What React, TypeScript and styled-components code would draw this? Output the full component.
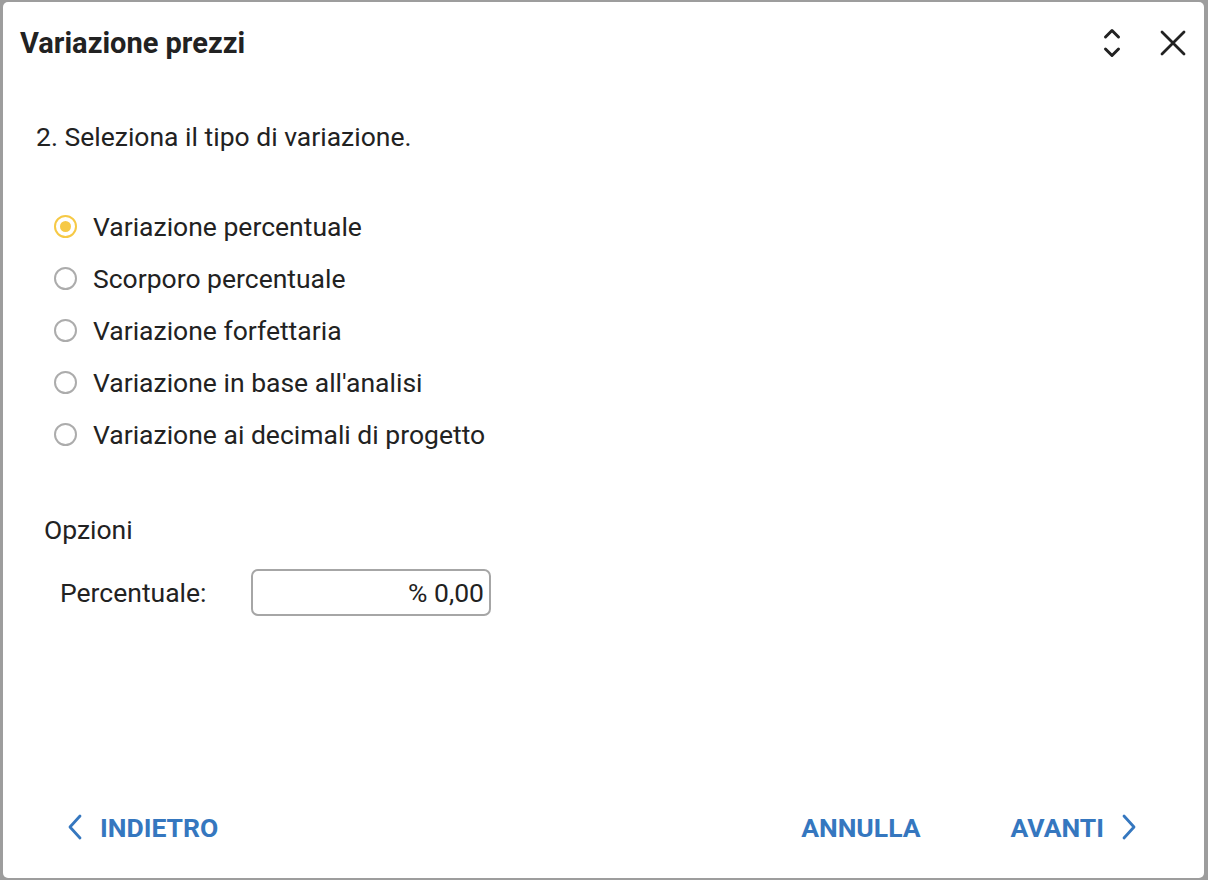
import React, { useState } from 'react';
import styled, { createGlobalStyle } from 'styled-components';

const GlobalStyle = createGlobalStyle`
  html, body {
    margin: 0;
    padding: 0;
    background: #9d9d9d;
  }
  * {
    box-sizing: border-box;
  }
`;

const Backdrop = styled.div`
  width: 1208px;
  height: 880px;
  padding: 2px 4px 2px 3px;
  background: #9d9d9d;
  font-family: Roboto, 'Liberation Sans', sans-serif;
  color: #222;
`;

const Dialog = styled.div`
  height: 100%;
  background: #fff;
  border-radius: 5px;
  display: flex;
  flex-direction: column;
`;

const Header = styled.div`
  height: 82px;
  padding: 0 18px 0 17px;
  display: flex;
  align-items: center;
  justify-content: space-between;
`;

const Title = styled.h1`
  margin: 0;
  font-size: 29px;
  font-weight: 700;
  color: #222;
`;

const HeaderTools = styled.div`
  display: flex;
  align-items: center;
  gap: 38px;
`;

const IconButton = styled.button`
  border: 0;
  padding: 0;
  background: none;
  display: flex;
  align-items: center;
  justify-content: center;
  color: #222;
  cursor: pointer;
`;

const Body = styled.div`
  padding: 38px 0 0 33px;
  flex: 1;
`;

const Instruction = styled.p`
  margin: 0;
  font-size: 26.5px;
  line-height: 30px;
`;

const RadioList = styled.div`
  margin-top: 48px;
  padding-left: 18px;
  display: flex;
  flex-direction: column;
`;

const RadioRow = styled.label`
  height: 52px;
  display: flex;
  align-items: center;
  gap: 16px;
  font-size: 26.5px;
  cursor: pointer;
`;

const RadioCircle = styled.span<{ $checked: boolean }>`
  width: 23px;
  height: 23px;
  border-radius: 50%;
  border: 2.5px solid ${(p) => (p.$checked ? '#f6c945' : '#acacac')};
  display: flex;
  align-items: center;
  justify-content: center;
  &::after {
    content: '';
    width: 11px;
    height: 11px;
    border-radius: 50%;
    background: ${(p) => (p.$checked ? '#f6c945' : 'transparent')};
  }
`;

const Section = styled.div`
  margin-top: 55px;
  padding-left: 8px;
`;

const SectionTitle = styled.div`
  font-size: 26.5px;
  line-height: 30px;
`;

const FieldRow = styled.div`
  margin-top: 24px;
  padding-left: 16px;
  display: flex;
  align-items: center;
`;

const FieldLabel = styled.span`
  width: 191px;
  font-size: 26.5px;
`;

const NumberInput = styled.input`
  width: 240px;
  height: 47px;
  border: 2px solid #a6a6a6;
  border-radius: 7px;
  padding: 0 5px;
  text-align: right;
  font-family: Roboto, 'Liberation Sans', sans-serif;
  font-size: 26.5px;
  color: #222;
  outline: none;
`;

const Footer = styled.div`
  height: 102px;
  padding: 0 67px 0 64px;
  display: flex;
  align-items: center;
`;

const Spacer = styled.div`
  flex: 1;
`;

const TextButton = styled.button<{ $gapAfter?: number }>`
  border: 0;
  background: none;
  padding: 0;
  display: flex;
  align-items: center;
  gap: 17px;
  font-family: Roboto, 'Liberation Sans', sans-serif;
  font-size: 26.5px;
  font-weight: 700;
  color: #3577bf;
  cursor: pointer;
  margin-right: ${(p) => p.$gapAfter ?? 0}px;
`;

const Chevron = ({ dir }: { dir: 'left' | 'right' }) => (
  <svg width="16" height="26" viewBox="0 0 16 26" fill="none">
    <path
      d={dir === 'left' ? 'M13 2 L3 13 L13 24' : 'M3 2 L13 13 L3 24'}
      stroke="#3577bf"
      strokeWidth="2.8"
      strokeLinecap="round"
      strokeLinejoin="round"
    />
  </svg>
);

const options = [
  'Variazione percentuale',
  'Scorporo percentuale',
  'Variazione forfettaria',
  "Variazione in base all'analisi",
  'Variazione ai decimali di progetto',
];

const App: React.FC = () => {
  const [selected, setSelected] = useState(0);
  return (
    <>
      <GlobalStyle />
      <Backdrop>
        <Dialog>
          <Header>
            <Title>Variazione prezzi</Title>
            <HeaderTools>
              <IconButton>
                <svg width="20" height="34" viewBox="0 0 20 34" fill="none">
                  <path d="M3.5 11 L10 4.5 L16.5 11" stroke="#222" strokeWidth="3" strokeLinecap="round" strokeLinejoin="round" />
                  <path d="M3.5 23 L10 29.5 L16.5 23" stroke="#222" strokeWidth="3" strokeLinecap="round" strokeLinejoin="round" />
                </svg>
              </IconButton>
              <IconButton>
                <svg width="26" height="26" viewBox="0 0 26 26" fill="none">
                  <path d="M2 2 L24 24 M24 2 L2 24" stroke="#222" strokeWidth="2.8" strokeLinecap="round" />
                </svg>
              </IconButton>
            </HeaderTools>
          </Header>
          <Body>
            <Instruction>2. Seleziona il tipo di variazione.</Instruction>
            <RadioList>
              {options.map((o, i) => (
                <RadioRow key={o} onClick={() => setSelected(i)}>
                  <RadioCircle $checked={selected === i} />
                  {o}
                </RadioRow>
              ))}
            </RadioList>
            <Section>
              <SectionTitle>Opzioni</SectionTitle>
              <FieldRow>
                <FieldLabel>Percentuale:</FieldLabel>
                <NumberInput defaultValue="% 0,00" />
              </FieldRow>
            </Section>
          </Body>
          <Footer>
            <TextButton>
              <Chevron dir="left" />
              INDIETRO
            </TextButton>
            <Spacer />
            <TextButton $gapAfter={90}>ANNULLA</TextButton>
            <TextButton>
              AVANTI
              <Chevron dir="right" />
            </TextButton>
          </Footer>
        </Dialog>
      </Backdrop>
    </>
  );
};

export default App;
